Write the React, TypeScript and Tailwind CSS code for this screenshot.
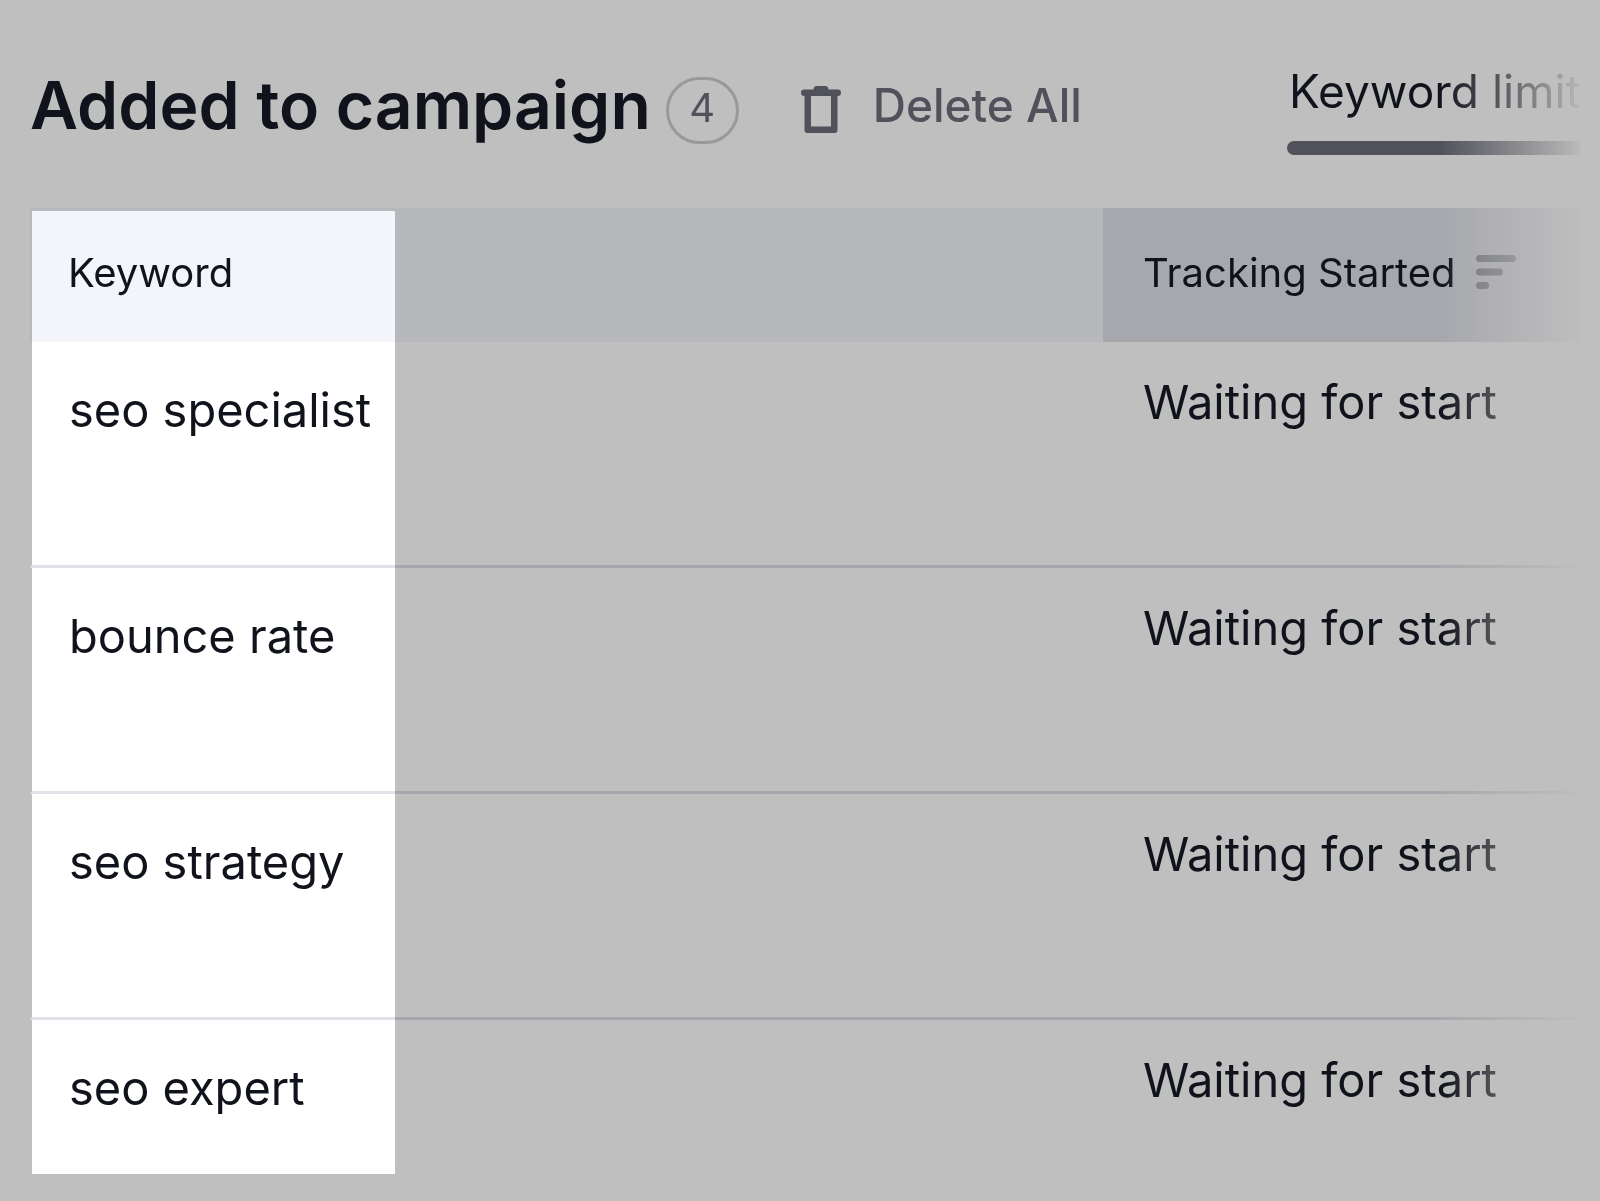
const keywords = [
  { keyword: 'seo specialist', status: 'Waiting for start' },
  { keyword: 'bounce rate', status: 'Waiting for start' },
  { keyword: 'seo strategy', status: 'Waiting for start' },
  { keyword: 'seo expert', status: 'Waiting for start' },
];

const TrashIcon = () => (
  <svg width="40" height="47" viewBox="0 0 40 47" fill="currentColor" aria-hidden="true">
    <path
      fillRule="evenodd"
      d="M16 0h8a3.500 3.500 0 0 1 3.500 3.500h9.200a3.300 3.300 0 0 1 0 6.600H36.500V44a3 3 0 0 1-3 3h-27a3 3 0 0 1-3-3V10.100H3.300a3.300 3.300 0 0 1 0-6.600H12.500A3.500 3.500 0 0 1 16 0ZM10 10.100V40.500h20V10.100Z"
    />
  </svg>
);

const SortIcon = () => (
  <svg width="40" height="34" viewBox="0 0 40 34" fill="none" stroke="currentColor" strokeWidth="7" strokeLinecap="round" aria-hidden="true">
    <path d="M3.500 3.500h33M3.500 17h20M3.500 30.500h6" />
  </svg>
);

const CampaignHeader: React.FC<{ count: number }> = ({ count }) => (
  <header className="flex h-[208px] items-start pl-[30px] pr-[19px] pt-[67px]">
    <h1 className="text-[66px] leading-[76px] font-semibold whitespace-nowrap">Added to campaign</h1>
    <span className="ml-[15px] mt-2.5 flex h-[67px] w-[73px] shrink-0 items-center justify-center rounded-full border-[3px] border-[#98999d] pb-1.5 text-[40px] leading-[48px] text-[#50515a]">
      {count}
    </span>
    <button type="button" className="ml-[62px] mt-2.5 flex items-center gap-8 whitespace-nowrap text-[46px] leading-[56px] font-medium text-[#50515a]">
      <span className="pt-2">
        <TrashIcon />
      </span>
      Delete All
    </button>
    <div className="ml-auto w-[294px] shrink-0">
      <p id="limit-label" className="whitespace-nowrap pl-0.5 text-[46px] leading-[48px]">Keyword limit</p>
      <div role="progressbar" aria-labelledby="limit-label" className="mt-[26px] h-3.5 rounded-full bg-[#50515a]" />
    </div>
  </header>
);

const KeywordTable = () => (
  <div className="pl-[30px] pr-[19px]">
    <table className="w-full table-fixed border-separate border-spacing-0 text-left">
      <colgroup>
        <col className="w-[365px]" />
        <col />
        <col className="w-[478px]" />
      </colgroup>
      <thead>
        <tr className="h-[134px] text-[40px] leading-[48px]">
          <th className="border-l-2 border-t-[3px] border-[#b6b8bc] bg-[#f3f5fa] pl-9 pb-2 font-normal">Keyword</th>
          <td className="bg-[#b6b8bc]" />
          <th className="bg-[#a7a8ad] pl-10 pb-1 font-normal">
            <button type="button" className="flex items-center gap-5 whitespace-nowrap">
              Tracking Started
              <span className="pb-0.5 text-[#6e6f74]">
                <SortIcon />
              </span>
            </button>
          </th>
        </tr>
      </thead>
      <tbody className="text-[47px] leading-[56px]">
        {keywords.map(({ keyword, status }) => (
          <tr key={keyword} className="group h-[226px] align-top last:h-[154px]">
            <td className="border-b-[3px] border-l-2 border-b-[#dfe2e7] border-l-[#bfbfbf] bg-white pl-[37px] pt-10 whitespace-nowrap group-last:border-b-0">
              {keyword}
            </td>
            <td className="border-b-[3px] border-[#a6a8ad] group-last:border-b-0" />
            <td className="border-b-[3px] border-[#a6a8ad] pl-10 pt-8 whitespace-nowrap group-last:border-b-0">{status}</td>
          </tr>
        ))}
      </tbody>
    </table>
  </div>
);

export default function App() {
  return (
    <div className="min-h-screen bg-[#bfbfbf] font-['Inter',sans-serif] text-[#10131b]">
      {/* content fades out towards the right edge */}
      <main className="pb-[27px] [mask-image:linear-gradient(to_right,black_calc(100%-160px),transparent_calc(100%-14px))]">
        <CampaignHeader count={keywords.length} />
        <KeywordTable />
      </main>
    </div>
  );
}
